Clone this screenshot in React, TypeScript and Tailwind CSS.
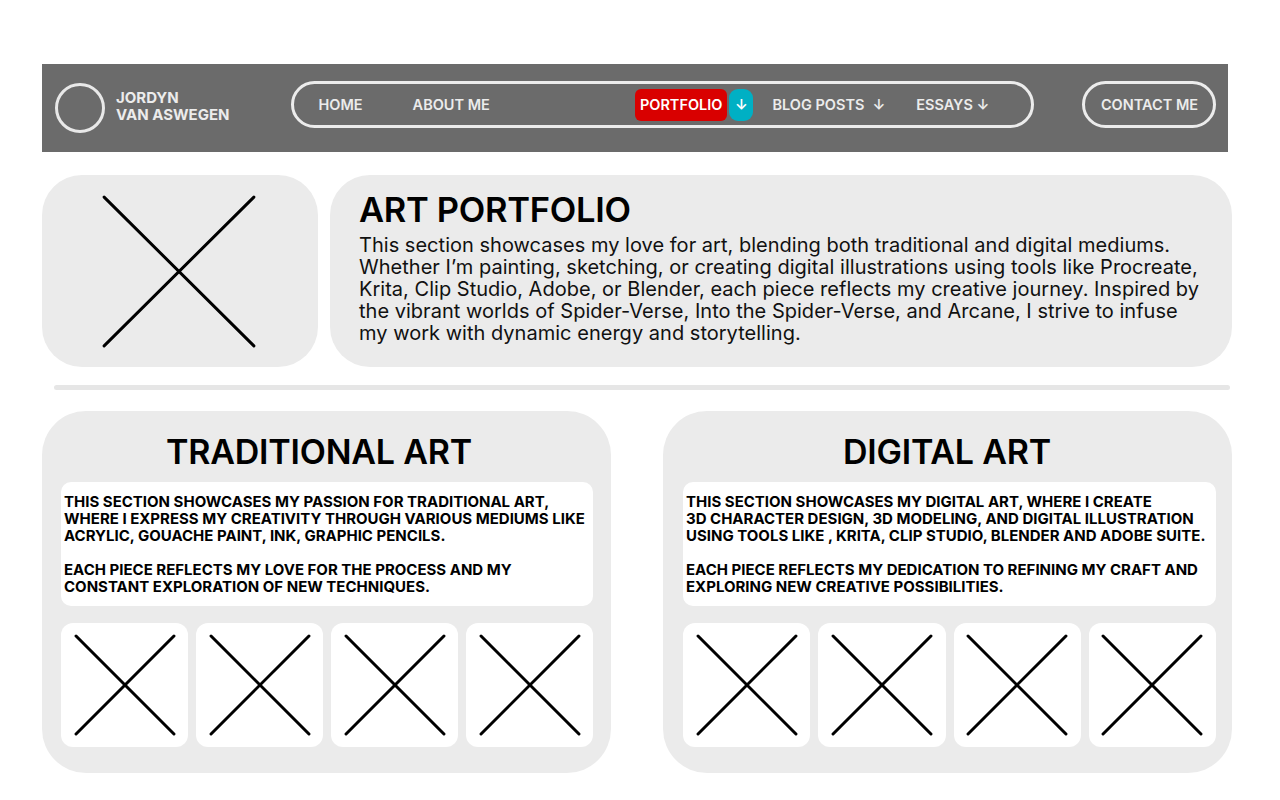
const font = { fontFamily: "Inter, 'Noto Sans', sans-serif" };

function Cross({ className = "" }: { className?: string }) {
  return (
    <svg viewBox="0 0 100 100" preserveAspectRatio="none" className={className}>
      <line x1="2" y1="2" x2="98" y2="98" stroke="black" strokeWidth="3" strokeLinecap="round" vectorEffect="non-scaling-stroke" />
      <line x1="98" y1="2" x2="2" y2="98" stroke="black" strokeWidth="3" strokeLinecap="round" vectorEffect="non-scaling-stroke" />
    </svg>
  );
}

function Thumb() {
  return (
    <div className="bg-white rounded-[12px] h-[124px] flex items-center justify-center">
      <Cross className="w-[102px] h-[102px]" />
    </div>
  );
}

function ArtCard({
  title,
  lines1,
  lines2,
  titleClass,
  padClass,
}: {
  title: string;
  lines1: string[];
  lines2: string[];
  titleClass: string;
  padClass: string;
}) {
  return (
    <div className={`bg-[#ebebeb] rounded-[44px] h-[362px] pt-[21px] ${padClass}`}>
      <h2 className={`text-center text-[34px] font-semibold leading-[40px] text-black tracking-[-0.2px] ${titleClass}`}>{title}</h2>
      <div className="mt-[10px] bg-white rounded-[10px] h-[124px] pl-[3px] pt-[11px] text-[15px] font-bold leading-[17px] text-black">
        {lines1.map((l) => (
          <div key={l}>{l}</div>
        ))}
        <div className="h-[17px]" />
        {lines2.map((l) => (
          <div key={l}>{l}</div>
        ))}
      </div>
      <div className="mt-[17px] grid grid-cols-4 gap-[8px]">
        <Thumb />
        <Thumb />
        <Thumb />
        <Thumb />
      </div>
    </div>
  );
}

export default function App() {
  return (
    <div className="min-h-screen bg-white pt-[64px]" style={font}>
      {/* header */}
      <header className="ml-[42px] w-[1186px] h-[88px] bg-[#6b6b6b] flex items-start pl-[13px] text-[#ececec]">
        <div className="mt-[19px] w-[50px] h-[50px] rounded-full border-[3px] border-[#e8e8e8]" />
        <div className="mt-[25px] ml-[11px] text-[15px] font-bold leading-[17px]">
          <div>JORDYN</div>
          <div>VAN ASWEGEN</div>
        </div>
        <nav className="mt-[17px] ml-[62px] w-[743px] h-[47px] rounded-full border-[3px] border-[#ececec] flex items-center text-[14.5px] font-semibold">
          <span className="ml-[24px]">HOME</span>
          <span className="ml-[50px]">ABOUT ME</span>
          <span className="ml-[145px] bg-[#d90000] rounded-[6px] h-[32px] px-[5px] flex items-center text-white">PORTFOLIO</span>
          <span className="ml-[2px] bg-[#00b0c4] rounded-[9px] h-[32px] w-[24px] flex items-center justify-center text-white">↓</span>
          <span className="ml-[19px]">
            BLOG POSTS<span className="ml-[8px]">↓</span>
          </span>
          <span className="ml-[31px]">ESSAYS ↓</span>
        </nav>
        <div className="mt-[17px] ml-[48px] w-[134px] h-[47px] rounded-full border-[3px] border-[#ececec] flex items-center justify-center text-[14.5px] font-semibold">
          CONTACT ME
        </div>
      </header>

      {/* intro */}
      <section className="ml-[42px] w-[1190px] mt-[23px] flex gap-[12px]">
        <div className="w-[276px] h-[192px] rounded-[40px] bg-[#ebebeb] flex items-center justify-center shrink-0 pr-[3px]">
          <Cross className="w-[156px] h-[155px]" />
        </div>
        <div className="flex-1 h-[192px] rounded-[40px] bg-[#ebebeb] pl-[29px] pt-[15px]">
          <h1 className="text-[34.5px] font-semibold leading-[40px] text-black tracking-[-0.3px]">ART PORTFOLIO</h1>
          <p className="mt-[4px] text-[20px] leading-[22px] text-[#111] tracking-[0.02px]">
            This section showcases my love for art, blending both traditional and digital mediums.
            <br />
            Whether I’m painting, sketching, or creating digital illustrations using tools like Procreate,
            <br />
            Krita, Clip Studio, Adobe, or Blender, each piece reflects my creative journey. Inspired by
            <br />
            the vibrant worlds of Spider-Verse, Into the Spider-Verse, and Arcane, I strive to infuse
            <br />
            my work with dynamic energy and storytelling.
          </p>
        </div>
      </section>

      <div className="ml-[54px] w-[1176px] h-[5px] mt-[18px] rounded-full bg-[#e6e6e6]" />

      {/* art sections */}
      <section className="ml-[42px] w-[1190px] mt-[21px] grid grid-cols-2 gap-[52px]">
        <ArtCard
          title="TRADITIONAL ART"
          titleClass="pr-[16px]"
          padClass="pl-[19px] pr-[18px]"
          lines1={[
            "THIS SECTION SHOWCASES MY PASSION FOR TRADITIONAL ART,",
            "WHERE I EXPRESS MY CREATIVITY THROUGH VARIOUS MEDIUMS LIKE",
            "ACRYLIC, GOUACHE PAINT, INK, GRAPHIC PENCILS.",
          ]}
          lines2={["EACH PIECE REFLECTS MY LOVE FOR THE PROCESS AND MY", "CONSTANT EXPLORATION OF NEW TECHNIQUES."]}
        />
        <ArtCard
          title="DIGITAL ART"
          titleClass="pr-[5px]"
          padClass="pl-[20px] pr-[16px]"
          lines1={[
            "THIS SECTION SHOWCASES MY DIGITAL ART, WHERE I CREATE",
            "3D CHARACTER DESIGN, 3D MODELING, AND DIGITAL ILLUSTRATION",
            "USING TOOLS LIKE , KRITA, CLIP STUDIO, BLENDER AND ADOBE SUITE.",
          ]}
          lines2={["EACH PIECE REFLECTS MY DEDICATION TO REFINING MY CRAFT AND", "EXPLORING NEW CREATIVE POSSIBILITIES."]}
        />
      </section>
    </div>
  );
}
